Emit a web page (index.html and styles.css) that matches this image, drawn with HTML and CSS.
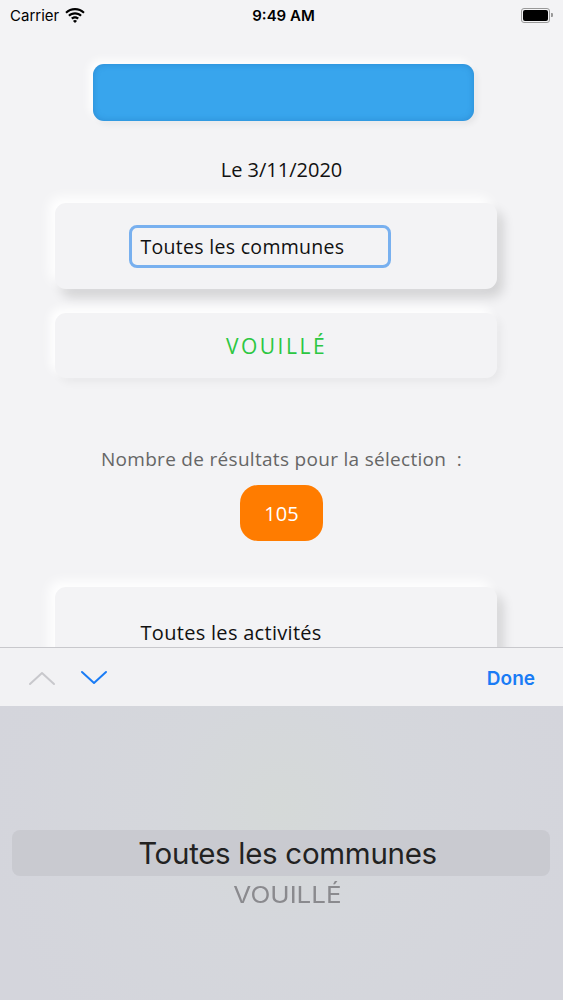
FILE: index.html
```html
<!DOCTYPE html>
<html lang="fr">
<head>
    <meta charset="UTF-8">
    <title>Recherche</title>
    <link rel="stylesheet" href="styles.css">
</head>
<body>
    <div class="status-bar">
        <div class="status-left">
            <span>Carrier</span>
            <svg class="wifi" width="20" height="15" viewBox="0 0 20 15">
                <path d="M10 2.2c3.2 0 6.1 1.2 8.3 3.3l1.4-1.5C17.1 1.5 13.7 0 10 0S2.9 1.5.3 4l1.4 1.5C3.9 3.4 6.8 2.2 10 2.2z"/>
                <path d="M10 6.4c2 0 3.9.8 5.3 2.1l1.5-1.5C15 5.3 12.6 4.3 10 4.3S5 5.3 3.2 7l1.5 1.5C6.1 7.2 8 6.4 10 6.4z"/>
                <path d="M10 10.5c.9 0 1.7.3 2.3.9L14 9.8c-1.1-1-2.5-1.6-4-1.6s-2.9.6-4 1.6l1.7 1.6c.6-.6 1.4-.9 2.3-.9z"/>
                <path d="M10 15l2-2.1c-.5-.5-1.2-.8-2-.8s-1.5.3-2 .8z"/>
            </svg>
        </div>
        <div class="status-time">9:49 AM</div>
        <div class="battery">
            <div class="battery-body"><div class="battery-level"></div></div>
            <div class="battery-nub"></div>
        </div>
    </div>

    <main class="content">
        <div class="header-bar"></div>
        <div class="date">Le 3/11/2020</div>

        <div class="card card-raised">
            <div class="select-field">Toutes les communes</div>
        </div>

        <div class="card card-flat">
            <span class="commune">VOUILLÉ</span>
        </div>

        <div class="result-label">Nombre de résultats pour la sélection&nbsp; :</div>
        <div class="result-count">105</div>

        <div class="card card-raised card-activities">
            <div class="activities">Toutes les activités</div>
        </div>
    </main>

    <div class="keyboard">
        <div class="accessory">
            <div class="arrows">
                <svg width="28" height="16" viewBox="0 0 28 16" class="arrow-up">
                    <polyline points="2,14 14,3 26,14"/>
                </svg>
                <svg width="28" height="16" viewBox="0 0 28 16" class="arrow-down">
                    <polyline points="2,2 14,13 26,2"/>
                </svg>
            </div>
            <div class="done">Done</div>
        </div>
        <div class="picker">
            <div class="picker-band"></div>
            <div class="picker-items">
                <div class="picker-item selected">Toutes les communes</div>
                <div class="picker-item next">VOUILLÉ</div>
            </div>
        </div>
    </div>
</body>
</html>
```

FILE: styles.css
```css
body {
    margin: 0;
    width: 563px;
    height: 1000px;
    overflow: hidden;
    background-color: #f3f3f5;
    font-family: 'Open Sans', sans-serif;
    color: #111;
}

/* Status bar */
.status-bar {
    height: 30px;
    display: flex;
    align-items: center;
    justify-content: space-between;
    padding: 0 10px;
    font-family: 'Inter', 'Liberation Sans', sans-serif;
    font-size: 15px;
    color: #000;
}

.status-left {
    display: flex;
    align-items: center;
    gap: 6px;
    width: 120px;
}

.wifi {
    fill: #000;
}

.status-time {
    font-weight: 600;
    margin-left: 4px;
}

.battery {
    width: 120px;
    display: flex;
    justify-content: flex-end;
    align-items: center;
}

.battery-body {
    width: 25px;
    height: 11px;
    border: 1px solid #999;
    border-radius: 3px;
    padding: 1px;
}

.battery-level {
    height: 100%;
    background-color: #000;
    border-radius: 2px;
}

.battery-nub {
    width: 2px;
    height: 4px;
    background-color: #999;
    border-radius: 0 1px 1px 0;
    margin-left: 1px;
}

/* Content */
.content {
    display: flex;
    flex-direction: column;
    align-items: center;
}

.header-bar {
    margin-top: 34px;
    margin-left: 4px;
    width: 381px;
    height: 57px;
    border-radius: 11px;
    background-color: #38a5ed;
    box-shadow: inset 0 0 6px rgba(20, 90, 160, 0.35), -4px -4px 8px #ffffff, 3px 3px 6px rgba(0, 0, 0, 0.06);
}

.date {
    margin-top: 37px;
    font-size: 20px;
    line-height: 24px;
    color: #111;
}

.card {
    width: 442px;
    margin-right: 12px;
    border-radius: 11px;
    background-color: #f3f3f5;
    box-sizing: border-box;
}

.card-raised {
    margin-top: 21px;
    height: 86px;
    padding: 22px 0 0 74px;
    box-shadow: -6px -6px 12px #ffffff, 6px 8px 12px rgba(0, 0, 0, 0.14);
}

.select-field {
    width: 262px;
    height: 43px;
    box-sizing: border-box;
    border: 3px solid #78b0ef;
    border-radius: 8px;
    padding: 0 9px;
    font-size: 19.5px;
    letter-spacing: 0.3px;
    line-height: 37px;
    color: #111;
}

.card-flat {
    margin-top: 24px;
    height: 65px;
    display: flex;
    align-items: center;
    justify-content: center;
    box-shadow: -5px -5px 10px #ffffff, 4px 4px 10px rgba(0, 0, 0, 0.05);
}

.commune {
    color: #2cc742;
    font-size: 21px;
    letter-spacing: 2.5px;
    margin-left: 2px;
}

.result-label {
    margin-top: 69px;
    font-size: 19px;
    line-height: 24px;
    color: #666;
    letter-spacing: 0.3px;
}

.result-count {
    margin-top: 14px;
    width: 83px;
    height: 56px;
    border-radius: 18px;
    background-color: #ff7c00;
    color: #fff;
    font-size: 20px;
    display: flex;
    align-items: center;
    justify-content: center;
}

.card-activities {
    margin-top: 46px;
    height: 120px;
    padding: 34px 0 0 86px;
}

.activities {
    font-size: 20px;
    letter-spacing: 0.3px;
    line-height: 24px;
    color: #111;
}

/* Keyboard overlay */
.keyboard {
    position: fixed;
    left: 0;
    right: 0;
    bottom: 0;
    height: 353px;
    display: flex;
    flex-direction: column;
}

.accessory {
    height: 59px;
    background-color: #f2f2f4;
    border-top: 1px solid #c8c8cc;
    display: flex;
    align-items: center;
    justify-content: space-between;
    padding: 0 28px 0 28px;
    box-sizing: border-box;
}

.arrows {
    display: flex;
    gap: 24px;
    margin-top: 2px;
}

.arrows polyline {
    fill: none;
    stroke-width: 2;
    stroke-linecap: round;
    stroke-linejoin: round;
}

.arrow-up polyline {
    stroke: #c8c8cc;
}

.arrow-down polyline {
    stroke: #1a7cf5;
}

.done {
    font-family: 'Inter', 'Liberation Sans', sans-serif;
    font-weight: 600;
    font-size: 19px;
    color: #1a7cf5;
    margin-top: 2px;
}

.picker {
    flex: 1;
    background: radial-gradient(circle at 50% 35%, #d5d9d8 0, #d5d7dc 120px, #d4d5dc 300px);
    position: relative;
}

.picker-band {
    position: absolute;
    left: 12px;
    right: 13px;
    top: 124px;
    height: 46px;
    border-radius: 8px;
    background-color: #c9cad0;
}

.picker-items {
    position: relative;
    padding: 124px 0 0 12px;
    display: flex;
    flex-direction: column;
    align-items: center;
    font-family: 'Inter', 'Liberation Sans', sans-serif;
}

.picker-item.selected {
    height: 46px;
    line-height: 46px;
    font-size: 29.5px;
    color: #222;
    letter-spacing: -0.3px;
}

.picker-item.next {
    font-size: 26px;
    line-height: 38px;
    color: #8a8a8e;
    transform: scaleY(0.9);
}
```
